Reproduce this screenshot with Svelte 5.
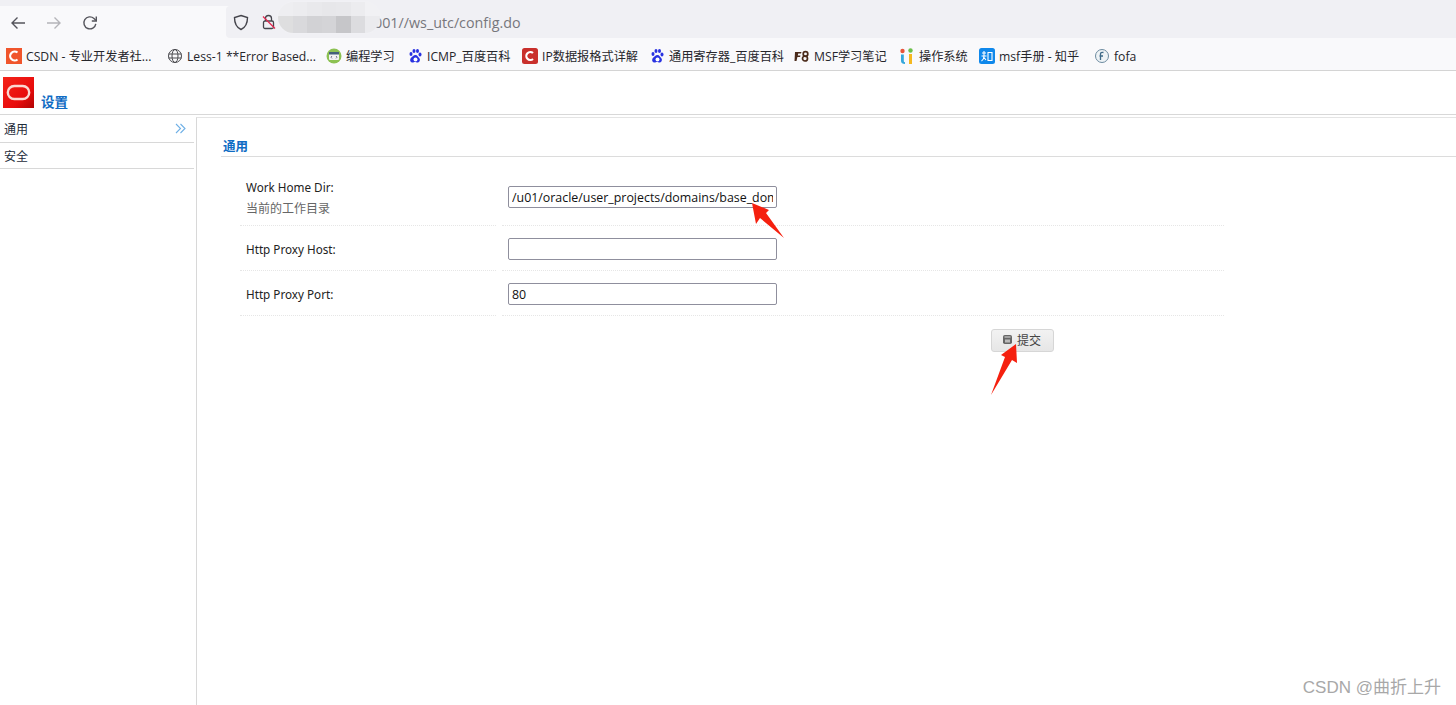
<script>
  const bookmarks = [
    { id: "csdn", label: "CSDN - 专业开发者社...", w: 161 },
    { id: "globe", label: "Less-1 **Error Based...", w: 159 },
    { id: "code", label: "编程学习", w: 81 },
    { id: "paw", label: "ICMP_百度百科", w: 115 },
    { id: "cred", label: "IP数据报格式详解", w: 127 },
    { id: "paw", label: "通用寄存器_百度百科", w: 145 },
    { id: "f8", label: "MSF学习笔记", w: 105 },
    { id: "os", label: "操作系统", w: 80 },
    { id: "zhi", label: "msf手册 - 知乎", w: 115 },
    { id: "fofa", label: "fofa", w: 50 },
  ];
  const rows = [
    { label: "Http Proxy Host:", value: "" },
    { label: "Http Proxy Port:", value: "80" },
  ];
  // the pixelated patch that hides the host name
  const mosaic = [
    "#eeeef1", "#ececef", "#e9e9ec", "#e7e7ea", "#e8e8eb", "#ececef", "#f1f1f4",
    "#dededf", "#d9d9dc", "#d2d2d5", "#d4d4d7", "#c6c6c9", "#dcdcdf", "#ebebee",
  ];
</script>

<div class="browser">
  <div class="tabstrip"></div>
  <div class="toolbar">
    <div class="nav">
      <svg width="18" height="18" viewBox="0 0 18 18" fill="none" stroke="#55555c" stroke-width="1.4"><path d="M16 9H3M8.500 3.500 3 9l5.500 5.500"/></svg>
      <svg width="18" height="18" viewBox="0 0 18 18" fill="none" stroke="#b4b4b9" stroke-width="1.4"><path d="M2 9h13M9.500 3.500 15 9l-5.500 5.500"/></svg>
      <svg width="18" height="18" viewBox="0 0 18 18" fill="none" stroke="#55555c" stroke-width="1.4"><path d="M14.800 9.800A6 6 0 1 1 13 4.500L15 6.500"/><path d="M15.300 2.500v4.500h-4.500" /></svg>
    </div>
    <div class="urlbar">
      <svg width="16" height="17" viewBox="0 0 16 17" fill="none" stroke="#45454c" stroke-width="1.4"><path d="M8 1.500 14.500 3.500c0 5-1 9.500-6.500 12C2.500 13 1.500 8.500 1.500 3.500z"/></svg>
      <svg class="lock" width="14" height="16" viewBox="0 0 14 16" fill="none"><rect x="1.500" y="7" width="10" height="7.500" rx="1.500" stroke="#45454c" stroke-width="1.300"/><path d="M3.500 7V4.500a3 3 0 0 1 6 0V7" stroke="#45454c" stroke-width="1.300"/><path d="M1 2.500 13 14.500" stroke="#e22850" stroke-width="1.300"/></svg>
      <span class="url">001//ws_utc/config.do</span>
    </div>
    <div class="blur">
      {#each mosaic as c}
        <i style="background: {c}"></i>
      {/each}
    </div>
  </div>
  <div class="bookmarks">
    {#each bookmarks as b}
      <div class="bookmark" style="width: {b.w}px">
        <svg class="favicon" width="16" height="16" viewBox="0 0 16 16">
          {#if b.id === "csdn"}
            <rect width="16" height="16" fill="#f0552c"/><path d="M11.500 4.500a4.500 4.500 0 1 0 0 7" fill="none" stroke="#fff" stroke-width="2.200"/>
          {:else if b.id === "cred"}
            <rect width="16" height="16" rx="2.500" fill="#c9302c"/><path d="M11 5a4 4 0 1 0 0 6" fill="none" stroke="#fff" stroke-width="2.200"/>
          {:else if b.id === "globe"}
            <g fill="none" stroke="#4a4a4f" stroke-width="1"><circle cx="8" cy="8" r="6.500"/><ellipse cx="8" cy="8" rx="3" ry="6.500"/><path d="M1.500 6h13M1.500 10h13"/></g>
          {:else if b.id === "code"}
            <circle cx="8" cy="8" r="7.500" fill="#8cc152"/><rect x="3" y="4" width="10" height="8" rx="1" fill="#f3f3f3"/><rect x="3" y="4" width="10" height="2.500" fill="#44607a"/><path d="M6 8 5 9.200 6 10.400M10 8l1 1.200-1 1.200" fill="none" stroke="#557" stroke-width=".8"/>
          {:else if b.id === "paw"}
            <g fill="#2932e1"><ellipse cx="4" cy="6" rx="1.500" ry="2"/><ellipse cx="7" cy="3" rx="1.500" ry="2"/><ellipse cx="10.500" cy="3" rx="1.500" ry="2"/><ellipse cx="13" cy="6.500" rx="1.500" ry="2"/><path d="M8.500 7c2 0 2.500 2 4 3.500 1 1.500 0 4-2 4-1 0-1.500-.5-2.500-.5s-1.500.5-2.500.5c-2 0-3-2-2-4C5 9 6.500 7 8.500 7z"/></g><ellipse cx="8.500" cy="11.500" rx="2" ry="2" fill="#fff"/>
          {:else if b.id === "f8"}
            <path d="M1 4h6.500L7 5.500H4.200L3.800 7.500h2.700l-.4 1.500H3.400L2.500 13H.5z" fill="#4a2a1a"/><circle cx="11.500" cy="6" r="2.300" fill="none" stroke="#4a2a1a" stroke-width="1.700"/><circle cx="11" cy="10.500" r="2.500" fill="none" stroke="#4a2a1a" stroke-width="1.700"/>
          {:else if b.id === "os"}
            <circle cx="3.500" cy="3" r="2.200" fill="#e8553a"/><circle cx="11.500" cy="2.500" r="2.200" fill="#6cc04a"/><path d="M2 6.500h2.800V13c0 .8.500 1.200 1.200 1.200V16C3.500 16 2 15 2 13z" fill="#34a7dc"/><path d="M10 6h3v10h-3z" fill="#f5b81f"/>
          {:else if b.id === "zhi"}
            <rect width="16" height="16" rx="2.500" fill="#0f88eb"/><path d="M3 5h4M2.500 8h5M5 3v5c0 2-1 4-2.500 5M5 9.500 7 12M9 4.500h4v8H9z" fill="none" stroke="#fff" stroke-width="1.100"/>
          {:else}
            <circle cx="8" cy="8" r="6.500" fill="#eef3f6" stroke="#6d8ba0" stroke-width="1"/><path d="M6.500 12V6c0-1.200 1-1.800 3-1.500M5.500 8H9" fill="none" stroke="#3f6a88" stroke-width="1.300"/>
          {/if}
        </svg>
        <span>{b.label}</span>
      </div>
    {/each}
  </div>
</div>

<div class="app">
  <header class="header">
    <svg class="logo" width="31" height="31" viewBox="0 0 31 31">
      <defs><linearGradient id="lg" x1="0" y1="0" x2="1" y2="1"><stop offset="0" stop-color="#f4241a"/><stop offset="0.65" stop-color="#e80c0c"/><stop offset="1" stop-color="#b00404"/></linearGradient></defs>
      <rect width="31" height="31" fill="url(#lg)"/>
      <rect x="4.800" y="9" width="21.400" height="13" rx="6.500" fill="none" stroke="#fbd8d2" stroke-width="2.400"/>
    </svg>
    <h1>设置</h1>
  </header>

  <div class="main">
    <nav class="side">
      <div class="side-item">
        <span>通用</span>
        <svg width="11" height="11" viewBox="0 0 11 11" fill="none" stroke="#6fb0e6" stroke-width="1.100"><path d="M1 1l4.500 4.500L1 10M5.500 1 10 5.500 5.500 10"/></svg>
      </div>
      <div class="side-item"><span>安全</span></div>
    </nav>

    <section class="content">
      <h2>通用</h2>
      <div class="form">
        <div class="row first">
          <div class="label">
            <div>Work Home Dir:</div>
            <div class="hint">当前的工作目录</div>
          </div>
          <div class="field"><input type="text" value="/u01/oracle/user_projects/domains/base_domain/tmp" /></div>
        </div>
        {#each rows as row}
          <div class="row">
            <div class="label">{row.label}</div>
            <div class="field"><input type="text" value={row.value} /></div>
          </div>
        {/each}
      </div>
      <div class="actions">
        <button type="button">
          <svg width="9" height="9" viewBox="0 0 9 9"><rect width="9" height="9" rx="1.800" fill="#666"/><rect x="1.500" y="1.500" width="6" height="1" fill="#ddd"/><rect x="2" y="4.500" width="5" height="3" fill="#bbb"/></svg>
          提交
        </button>
      </div>
    </section>
  </div>
</div>

<!-- red annotation arrows drawn over the page -->
<svg class="arrows" width="1456" height="705" viewBox="0 0 1456 705">
  <path d="M752 203 769 210 766 213 784 238 760 218 756 224z" fill="#f5200f"/>
  <path d="M1016 344 1017 363 1012 360 991 395 1005 357 1001 355z" fill="#f5200f"/>
</svg>

<div class="watermark">CSDN @曲折上升</div>

<style>
  :global(body) {
    margin: 0;
    background: #fff;
    overflow: hidden;
  }
  .browser {
    height: 70px;
    background: #f9f9fb;
    font-family: "Open Sans", "Noto Sans CJK SC", sans-serif;
    color: #26262b;
    position: relative;
  }
  .tabstrip {
    height: 6px;
    background: #f0f0f4;
  }
  .toolbar {
    height: 32px;
    display: flex;
    align-items: center;
    position: relative;
  }
  .nav {
    width: 210px;
    margin-left: 9px;
    display: flex;
    gap: 18px;
    margin-top: 2px;
  }
  .urlbar {
    flex: 1;
    height: 32px;
    background: #f0f0f4;
    display: flex;
    align-items: center;
    padding-left: 7px;
    border-radius: 4px 0 0 4px;
    margin-left: 7px;
  }
  .lock {
    margin-left: 13px;
  }
  .url {
    margin-left: 98px;
    font-size: 14.300px;
    color: #77777c;
  }
  .blur {
    position: absolute;
    left: 278px;
    top: -4px;
    width: 102px;
    height: 31px;
    border-radius: 16px;
    overflow: hidden;
    display: grid;
    grid-template-columns: repeat(7, 1fr);
    grid-template-rows: 14px 17px;
    box-shadow: 0 0 2px #f4f4f6;
  }
  .blur i {
    display: block;
  }
  .bookmarks {
    height: 32px;
    display: flex;
    align-items: center;
    padding: 4px 0 0 6px;
    font-size: 12.200px;
    box-sizing: border-box;
  }
  .bookmark {
    display: flex;
    align-items: center;
    gap: 4px;
    white-space: nowrap;
    flex-shrink: 0;
  }
  .favicon {
    flex-shrink: 0;
  }
  .app {
    border-top: 1px solid #d4d4d4;
    font-family: "Noto Sans", "Noto Sans CJK SC", sans-serif;
    font-size: 12px;
    color: #222;
  }
  .header {
    height: 37px;
    display: flex;
    align-items: flex-start;
    border-bottom: 1px solid #d8d8d8;
    padding: 6px 0 0 3px;
  }
  .logo {
    flex-shrink: 0;
  }
  h1 {
    margin: 16px 0 0 7px;
    font-size: 13.500px;
    line-height: 18px;
    font-weight: bold;
    color: #0f6cc4;
  }
  .main {
    display: flex;
    height: 590px;
  }
  .side {
    width: 194px;
    flex-shrink: 0;
  }
  .side-item {
    height: 26px;
    border-bottom: 1px solid #d8d8d8;
    display: flex;
    align-items: center;
    justify-content: space-between;
    padding: 0 8px 0 4px;
    font-size: 12px;
    color: #1d2b3a;
  }
  .side-item:first-child {
    height: 27px;
  }
  .side-item:nth-child(2) {
    height: 25px;
  }
  .content {
    flex: 1;
    margin: 2px 0 0 2px;
    border-left: 1px solid #d8d8d8;
    border-top: 1px solid #e4e4e4;
    padding-left: 24px;
    min-width: 0;
  }
  h2 {
    margin: 21px 0 0;
    padding: 0 0 2px 2px;
    font-size: 12.500px;
    line-height: 15px;
    font-weight: bold;
    color: #0f6cc4;
    border-bottom: 1px solid #dcdcdc;
  }
  .form {
    width: 984px;
    margin: 21px 0 0 19px;
  }
  .row {
    display: flex;
    height: 45px;
    align-items: stretch;
  }
  .row.first {
    height: 48px;
  }
  .label {
    width: 250px;
    padding: 2px 0 0 6px;
    display: flex;
    flex-direction: column;
    justify-content: center;
    gap: 4px;
    font-size: 11.700px;
    border-bottom: 1px dotted #e6e6e6;
  }
  .first .label {
    padding-top: 0;
    padding-bottom: 8px;
  }
  .hint {
    color: #666;
    font-size: 12px;
  }
  .field {
    flex: 1;
    margin-left: 6px;
    padding: 2px 0 0 6px;
    display: flex;
    align-items: center;
    border-bottom: 1px dotted #e6e6e6;
  }
  .first .field {
    padding: 0 0 9px 6px;
  }
  input {
    width: 269px;
    height: 22px;
    box-sizing: border-box;
    border: 1px solid #8f8f9d;
    border-radius: 2px;
    padding: 0 3px;
    margin: 0;
    font-family: "Open Sans", sans-serif;
    font-size: 12.400px;
    color: #111;
    background: #fff;
    outline: none;
  }
  .actions {
    width: 833px;
    margin-top: 13px;
    display: flex;
    justify-content: flex-end;
  }
  button {
    width: 63px;
    height: 23px;
    border: 1px solid #d6d6d6;
    border-radius: 3px;
    background: linear-gradient(#f2f2f2, #e6e6e6);
    color: #444;
    font-family: "Noto Sans", "Noto Sans CJK SC", sans-serif;
    font-size: 12px;
    display: flex;
    align-items: center;
    justify-content: center;
    gap: 5px;
    padding: 0 1px 2px 0;
  }
  .arrows {
    position: absolute;
    left: 0;
    top: 0;
    pointer-events: none;
  }
  .watermark {
    position: absolute;
    right: 15px;
    bottom: 7px;
    font-family: "Liberation Sans", "Noto Sans CJK SC", sans-serif;
    font-size: 17px;
    color: #a8a8a8;
  }
</style>
